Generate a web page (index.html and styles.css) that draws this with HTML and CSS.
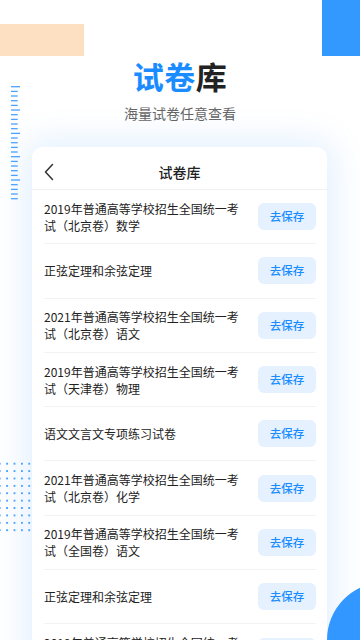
FILE: index.html
```html
<!DOCTYPE html>
<html lang="zh-CN">
<head>
<meta charset="utf-8">
<title>试卷库</title>
<link rel="stylesheet" href="styles.css">
</head>
<body>
<div class="screen">
  <div class="deco-peach"></div>
  <div class="deco-blue"></div>
  <svg class="deco-ruler" width="10" height="116" viewBox="0 0 10 116">
    <g stroke="#4aa3ff" stroke-width="1.3">
      <line x1="0" y1="0.7" x2="9" y2="0.7"/>
      <line x1="0" y1="5.4" x2="6.7" y2="5.4"/>
      <line x1="0" y1="10" x2="6.7" y2="10"/>
      <line x1="0" y1="14.7" x2="6.7" y2="14.7"/>
      <line x1="0" y1="19.4" x2="6.7" y2="19.4"/>
      <line x1="0" y1="24" x2="9" y2="24"/>
      <line x1="0" y1="28.7" x2="6.7" y2="28.7"/>
      <line x1="0" y1="33.4" x2="6.7" y2="33.4"/>
      <line x1="0" y1="38" x2="6.7" y2="38"/>
      <line x1="0" y1="42.7" x2="6.7" y2="42.7"/>
      <line x1="0" y1="47.4" x2="9" y2="47.4"/>
      <line x1="0" y1="52" x2="6.7" y2="52"/>
      <line x1="0" y1="56.7" x2="6.7" y2="56.7"/>
      <line x1="0" y1="61.4" x2="6.7" y2="61.4"/>
      <line x1="0" y1="66" x2="6.7" y2="66"/>
      <line x1="0" y1="70.7" x2="9" y2="70.7"/>
      <line x1="0" y1="75.4" x2="6.7" y2="75.4"/>
      <line x1="0" y1="80" x2="6.7" y2="80"/>
      <line x1="0" y1="84.7" x2="6.7" y2="84.7"/>
      <line x1="0" y1="89.4" x2="6.7" y2="89.4"/>
      <line x1="0" y1="94" x2="9" y2="94"/>
      <line x1="0" y1="98.7" x2="6.7" y2="98.7"/>
      <line x1="0" y1="103.4" x2="6.7" y2="103.4"/>
      <line x1="0" y1="108" x2="6.7" y2="108"/>
      <line x1="0" y1="112.7" x2="6.7" y2="112.7"/>
    </g>
  </svg>
  <div class="deco-dots"></div>
  <div class="deco-circle"></div>

  <header class="hero">
    <h1 class="hero-title"><span class="accent">试卷</span>库</h1>
    <p class="hero-sub">海量试卷任意查看</p>
  </header>

  <section class="card">
    <div class="card-head">
      <svg class="back" width="10" height="18" viewBox="0 0 10 18">
        <polyline points="8.5,1.5 1.5,9 8.5,16.5" fill="none" stroke="#333" stroke-width="1.5" stroke-linecap="round" stroke-linejoin="round"/>
      </svg>
      <span class="card-title">试卷库</span>
    </div>
    <ul class="list">
      <li class="row"><span class="row-text">2019年普通高等学校招生全国统一考试（北京卷）数学</span><span class="btn">去保存</span></li>
      <li class="row"><span class="row-text">正弦定理和余弦定理</span><span class="btn">去保存</span></li>
      <li class="row"><span class="row-text">2021年普通高等学校招生全国统一考试（北京卷）语文</span><span class="btn">去保存</span></li>
      <li class="row"><span class="row-text">2019年普通高等学校招生全国统一考试（天津卷）物理</span><span class="btn">去保存</span></li>
      <li class="row"><span class="row-text">语文文言文专项练习试卷</span><span class="btn">去保存</span></li>
      <li class="row"><span class="row-text">2021年普通高等学校招生全国统一考试（北京卷）化学</span><span class="btn">去保存</span></li>
      <li class="row"><span class="row-text">2019年普通高等学校招生全国统一考试（全国卷）语文</span><span class="btn">去保存</span></li>
      <li class="row"><span class="row-text">正弦定理和余弦定理</span><span class="btn">去保存</span></li>
      <li class="row"><span class="row-text">2019年普通高等学校招生全国统一考试（全国卷）数学</span><span class="btn">去保存</span></li>
    </ul>
  </section>
</div>
</body>
</html>
```

FILE: styles.css
```css
* { box-sizing: border-box; }
html, body {
  margin: 0;
  padding: 0;
  background: #ffffff;
}
body {
  font-family: "Noto Sans CJK SC", "Noto Sans", sans-serif;
  color: #222;
}
.screen {
  position: relative;
  width: 360px;
  height: 640px;
  overflow: hidden;
  background: #fff;
}
.deco-peach {
  position: absolute;
  left: 0;
  top: 24px;
  width: 84px;
  height: 32px;
  background: #fde0c1;
}
.deco-blue {
  position: absolute;
  right: 0;
  top: 0;
  width: 38px;
  height: 56px;
  background: #3399ff;
}
.deco-ruler {
  position: absolute;
  left: 11px;
  top: 86px;
}
.deco-dots {
  position: absolute;
  left: -3.7px;
  top: 460.3px;
  width: 37px;
  height: 74px;
  background-image: radial-gradient(circle at center, #4aa3ff 0, #4aa3ff 1px, rgba(74,163,255,0) 1.4px);
  background-size: 7.4px 7.4px;
}
.deco-circle {
  position: absolute;
  left: 327px;
  top: 582px;
  width: 116px;
  height: 116px;
  border-radius: 50%;
  background: #3399ff;
}
.hero {
  position: relative;
  padding-top: 58px;
  text-align: center;
}
.hero-title {
  margin: 0;
  font-size: 31px;
  line-height: 36px;
  font-weight: 700;
  color: #222;
  letter-spacing: 0.5px;
}
.accent { color: #1a8cff; }
.hero-sub {
  margin: 9px 0 0;
  font-size: 14px;
  line-height: 20px;
  color: #666;
}
.card {
  position: relative;
  z-index: 1;
  margin: 24px 33px 0 32px;
  background: #fff;
  border-radius: 11px;
  box-shadow: 0 0 34px 6px rgba(40, 140, 255, 0.14);
  height: 560px;
}
.card-head {
  position: relative;
  display: flex;
  align-items: center;
  justify-content: center;
  padding-top: 7px;
  height: 43px;
  border-bottom: 1px solid #f1f1f1;
}
.back {
  position: absolute;
  left: 12px;
  top: 16px;
}
.card-title {
  font-size: 14px;
  line-height: 36px;
  font-weight: 500;
  color: #222;
}
.list {
  list-style: none;
  margin: 0;
  padding: 0;
}
.row {
  display: flex;
  align-items: center;
  height: 54.3px;
  margin: 0 11px 0 12px;
  border-bottom: 1px solid #f2f2f2;
}
.row-text {
  flex: 1;
  font-size: 12px;
  line-height: 17px;
  color: #222;
  padding-right: 12px;
}
.btn {
  flex: none;
  width: 58px;
  height: 27px;
  border-radius: 6px;
  background: #e5f1ff;
  color: #1a8cff;
  font-size: 11.5px;
  font-weight: 500;
  line-height: 27px;
  text-align: center;
}
```
